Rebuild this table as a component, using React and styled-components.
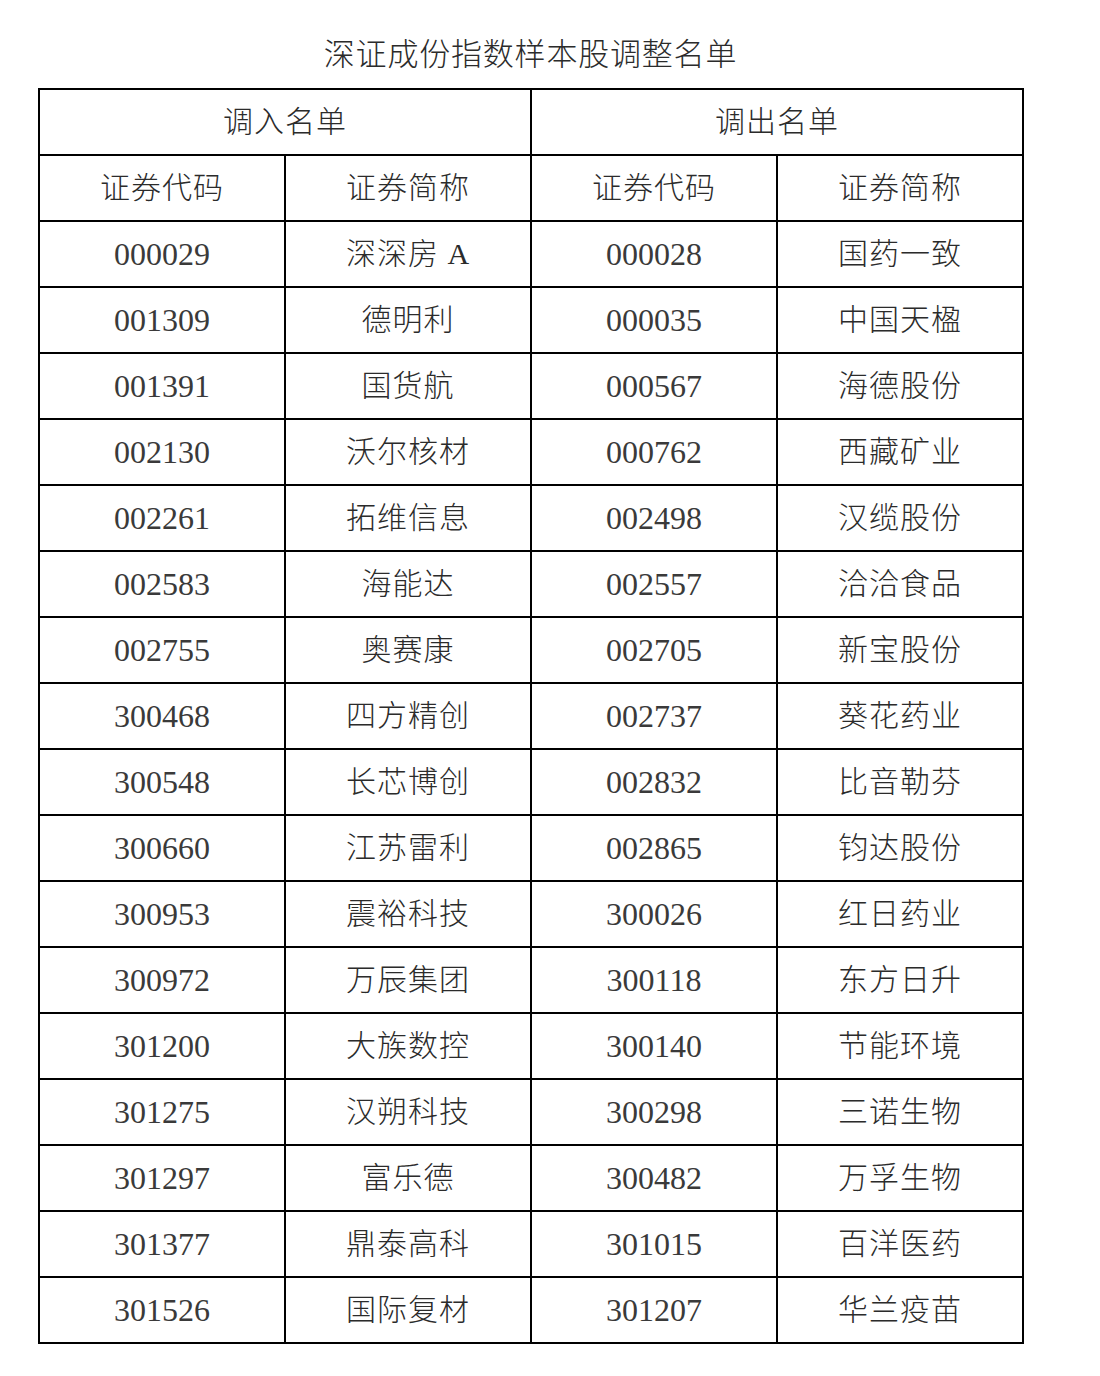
import styled, { createGlobalStyle } from "styled-components";

const GlobalStyle = createGlobalStyle`
  body {
    margin: 0;
    background: #fff;
    color: #2b2b2b;
    font-family: "Liberation Serif", "Noto Sans CJK SC", serif;
  }
`;

const Page = styled.div`
  width: 1100px;
  padding-left: 38px;
  box-sizing: border-box;
`;

const Title = styled.h1`
  width: 985px;
  margin: 35px 0 13px;
  font-size: 31px;
  line-height: 40px;
  font-weight: 300;
  text-align: center;
  letter-spacing: 0.8px;
`;

const Table = styled.table`
  width: 986px;
  border-collapse: collapse;
  table-layout: fixed;
`;

const Cell = styled.td`
  border: 2px solid #000;
  height: 64px;
  padding: 0;
  text-align: center;
  vertical-align: middle;
  font-size: ${(p) => (p.$code ? "32px" : "30px")};
  font-weight: 300;
  line-height: 1;
  color: ${(p) => (p.$code ? "#3a3a3a" : "#2b2b2b")};
  letter-spacing: ${(p) => (p.$code ? "0" : "1px")};
`;

const rows = [
  ["000029", "深深房 A", "000028", "国药一致"],
  ["001309", "德明利", "000035", "中国天楹"],
  ["001391", "国货航", "000567", "海德股份"],
  ["002130", "沃尔核材", "000762", "西藏矿业"],
  ["002261", "拓维信息", "002498", "汉缆股份"],
  ["002583", "海能达", "002557", "洽洽食品"],
  ["002755", "奥赛康", "002705", "新宝股份"],
  ["300468", "四方精创", "002737", "葵花药业"],
  ["300548", "长芯博创", "002832", "比音勒芬"],
  ["300660", "江苏雷利", "002865", "钧达股份"],
  ["300953", "震裕科技", "300026", "红日药业"],
  ["300972", "万辰集团", "300118", "东方日升"],
  ["301200", "大族数控", "300140", "节能环境"],
  ["301275", "汉朔科技", "300298", "三诺生物"],
  ["301297", "富乐德", "300482", "万孚生物"],
  ["301377", "鼎泰高科", "301015", "百洋医药"],
  ["301526", "国际复材", "301207", "华兰疫苗"],
];

export default function App() {
  return (
    <Page>
      <GlobalStyle />
      <Title>深证成份指数样本股调整名单</Title>
      <Table>
        <tbody>
          <tr>
            <Cell colSpan={2}>调入名单</Cell>
            <Cell colSpan={2}>调出名单</Cell>
          </tr>
          <tr>
            <Cell>证券代码</Cell>
            <Cell>证券简称</Cell>
            <Cell>证券代码</Cell>
            <Cell>证券简称</Cell>
          </tr>
          {rows.map((r) => (
            <tr key={r[0]}>
              <Cell $code>{r[0]}</Cell>
              <Cell>{r[1]}</Cell>
              <Cell $code>{r[2]}</Cell>
              <Cell>{r[3]}</Cell>
            </tr>
          ))}
        </tbody>
      </Table>
    </Page>
  );
}
